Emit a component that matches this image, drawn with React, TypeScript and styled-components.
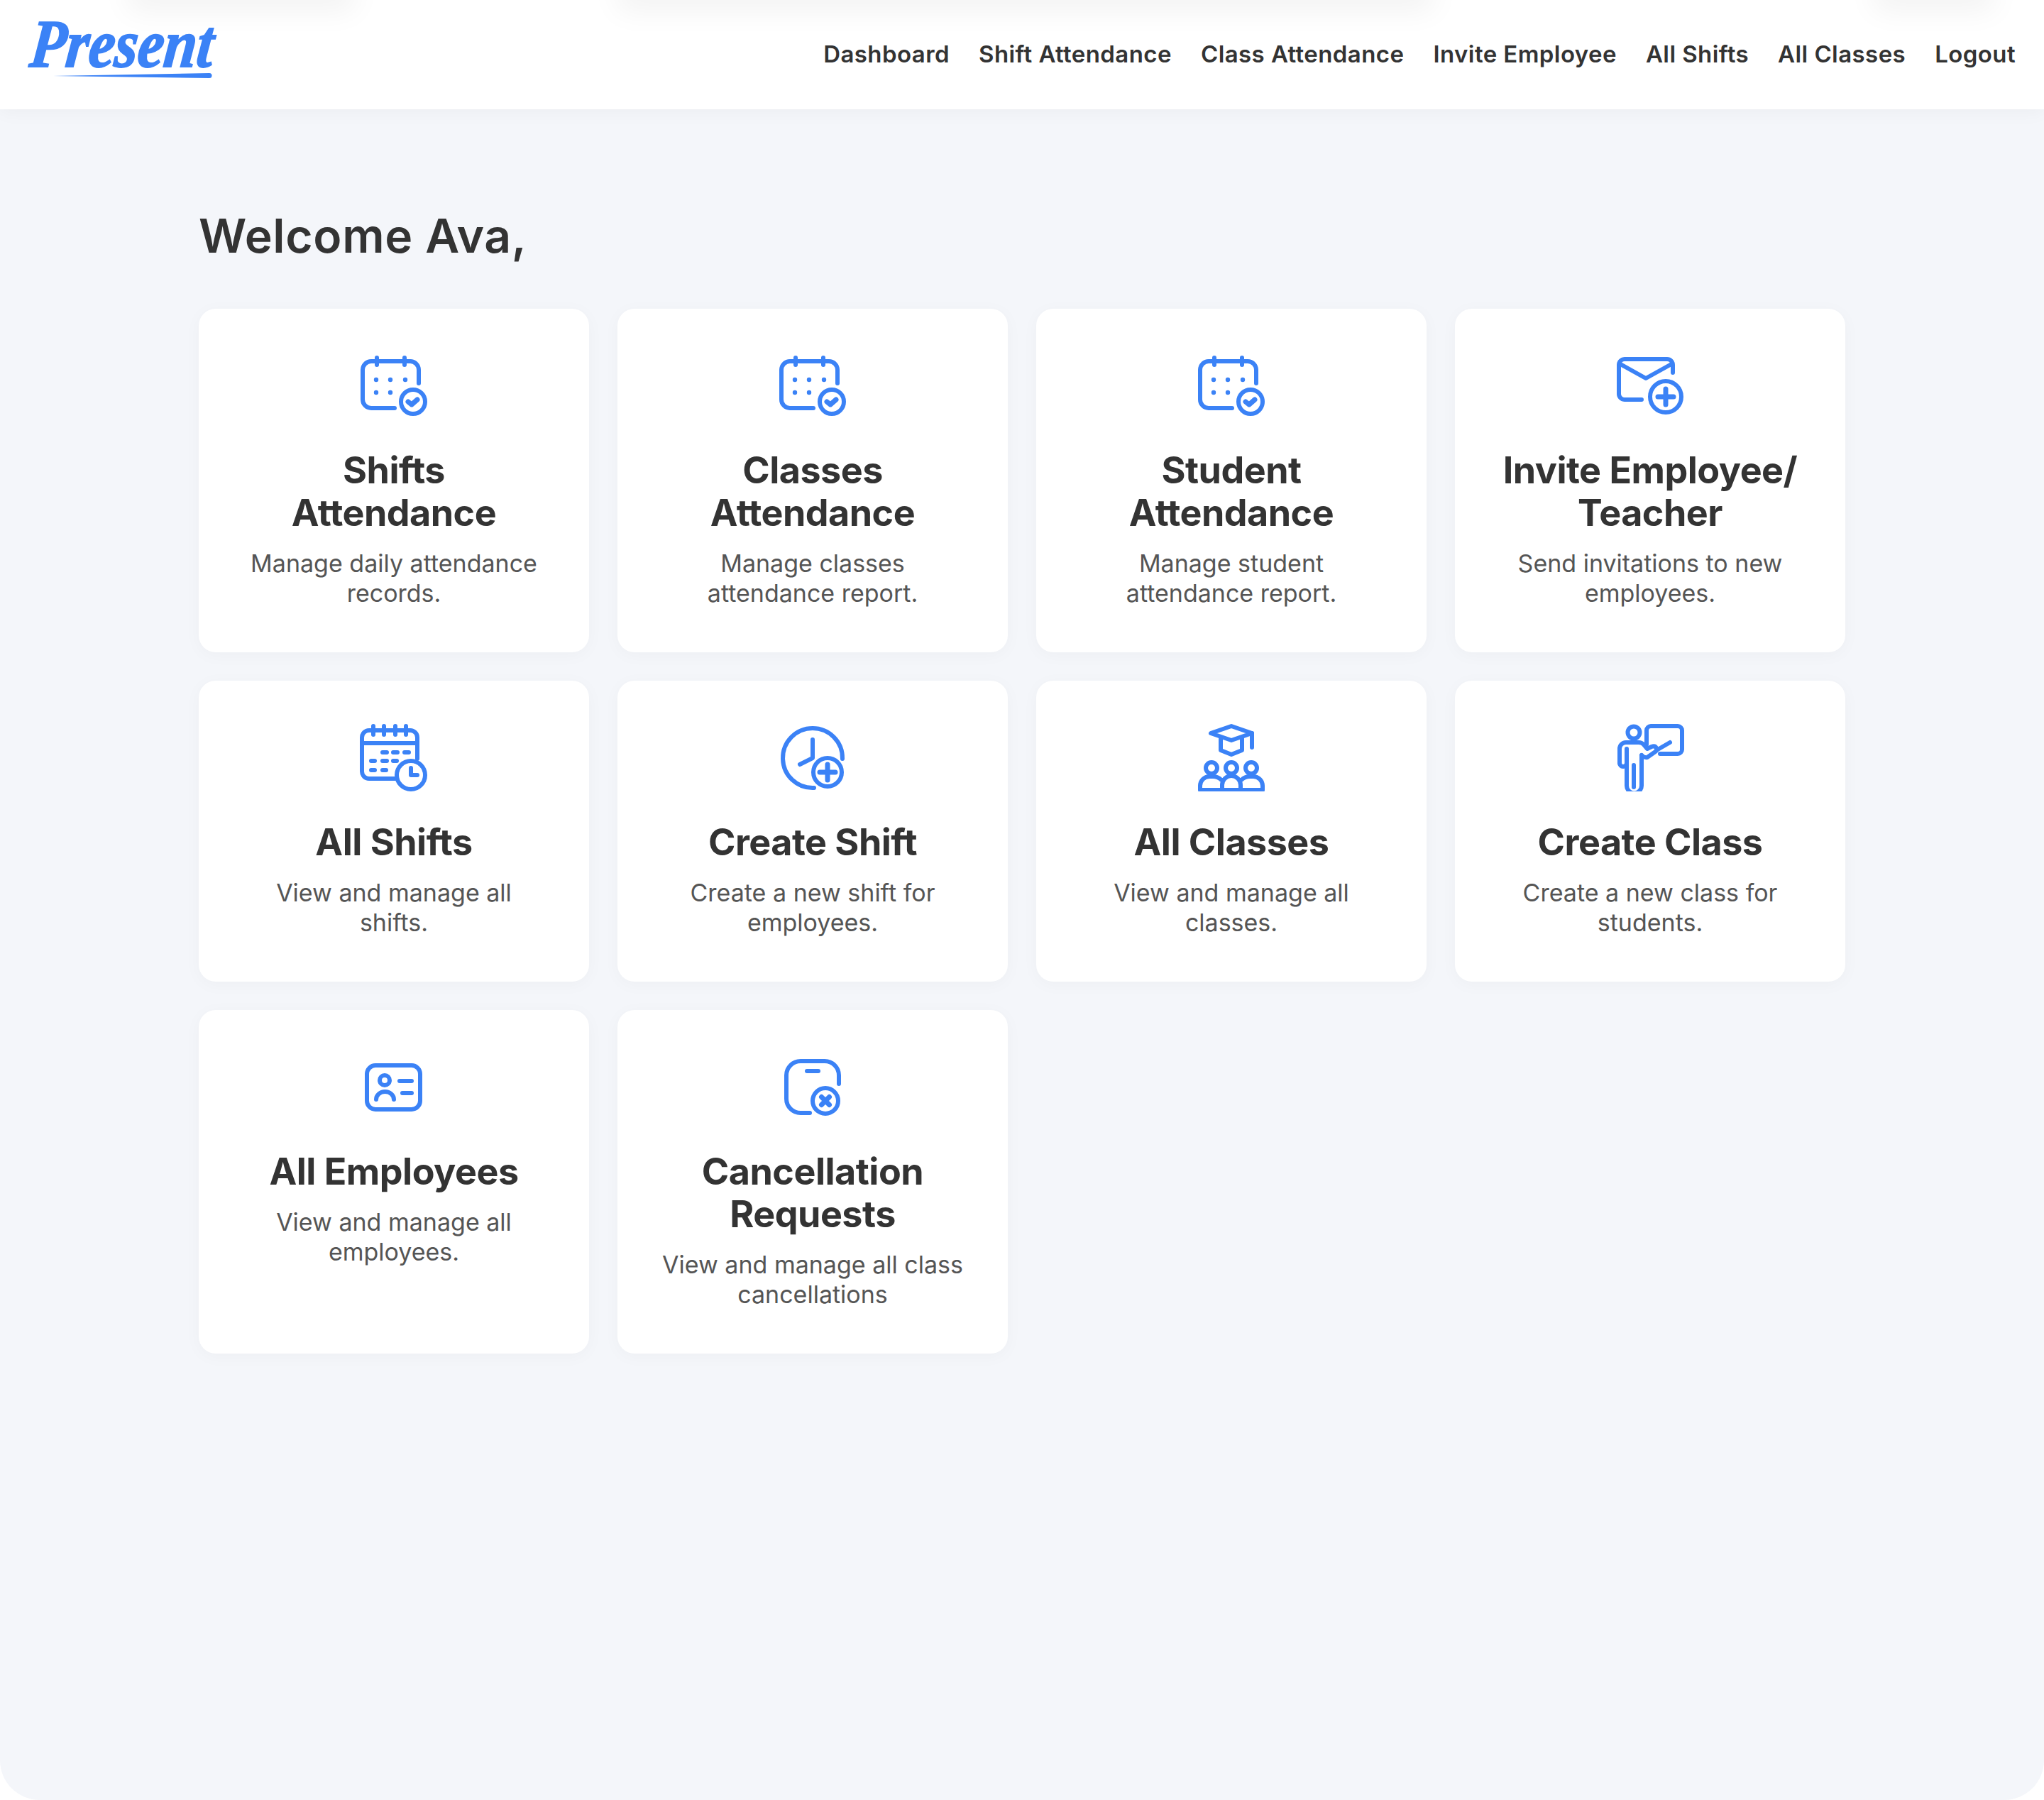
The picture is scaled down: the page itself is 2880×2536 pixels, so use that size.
import { FC, ReactNode } from "react";
import styled, { createGlobalStyle } from "styled-components";

const GlobalStyle = createGlobalStyle`
  html, body {
    margin: 0;
    padding: 0;
    background: #fff;
    font-family: "Inter", "Noto Sans", sans-serif;
  }
  * { box-sizing: border-box; }
`;

const blue = "#3b82f6";

const Page = styled.div`
  position: relative;
  height: 2536px;
  background: #f4f6fa;
  border-radius: 0 0 56px 56px;
  overflow: hidden;
`;

const Header = styled.header`
  position: relative;
  height: 154px;
  padding: 0 40px;
  display: flex;
  align-items: center;
  justify-content: space-between;
  background: #fff;
  overflow: hidden;
`;

const Shade = styled.div<{ $left: number; $width: number }>`
  position: absolute;
  top: -30px;
  left: ${(p) => p.$left}px;
  width: ${(p) => p.$width}px;
  height: 30px;
  box-shadow: 0 6px 40px 10px rgba(0, 0, 0, 0.05);
`;

const HeaderBar = styled.div`
  position: relative;
  box-shadow: 0 4px 24px rgba(0, 0, 0, 0.04);
`;

const LogoSvg = styled.svg`
  display: block;
  width: 320px;
  height: 130px;
  margin-bottom: 16px;
  overflow: visible;
`;

const Nav = styled.nav`
  position: relative;
  display: flex;
  gap: 41px;
  margin-bottom: 2px;
`;

const NavLink = styled.a`
  font-size: 33px;
  font-weight: 600;
  line-height: 40px;
  letter-spacing: 0.42px;
  color: #333;
  white-space: nowrap;
`;

const Main = styled.main`
  padding: 140px 280px 0;
`;

const Welcome = styled.h1`
  margin: 0 0 65px;
  font-size: 66px;
  font-weight: 600;
  line-height: 76px;
  letter-spacing: 0.65px;
  color: #333;
`;

const Grid = styled.div`
  display: grid;
  grid-template-columns: repeat(4, 550px);
  gap: 40px;
`;

const Card = styled.div`
  padding: 60px 60px 62px;
  background: #fff;
  border-radius: 24px;
  box-shadow: 0 4px 24px rgba(0, 0, 0, 0.03);
  display: flex;
  flex-direction: column;
  align-items: center;
  text-align: center;
`;

const IconSvg = styled.svg`
  display: block;
  width: 96px;
  height: 96px;
  margin-bottom: 42px;
  fill: none;
  stroke: ${blue};
  stroke-width: 6;
  stroke-linecap: round;
  stroke-linejoin: round;
`;

const Title = styled.h2`
  margin: 0 0 20px;
  font-size: 52px;
  font-weight: 700;
  line-height: 60px;
  letter-spacing: -0.5px;
  color: #333;
`;

const Desc = styled.p`
  margin: 0;
  font-size: 34px;
  font-weight: 400;
  line-height: 42px;
  color: #555;
`;

const Icon: FC<{ children: ReactNode }> = ({ children }) => (
  <IconSvg viewBox="0 0 96 96">{children}</IconSvg>
);

const CalendarCheck = () => (
  <Icon>
    <path d="M83 45V26a12 12 0 0 0-12-12H16A12 12 0 0 0 4 26v42a12 12 0 0 0 12 12h33" />
    <path d="M24 9v10M63 9v10" />
    <circle cx="75" cy="71" r="17" />
    <path d="M68 71l5 4 8-7" strokeWidth="7" />
    <g fill={blue} stroke="none">
      <circle cx="23" cy="40" r="3.200" />
      <circle cx="43" cy="40" r="3.200" />
      <circle cx="64" cy="40" r="3.200" />
      <circle cx="23" cy="58" r="3.200" />
      <circle cx="43" cy="58" r="3.200" />
    </g>
  </Icon>
);

const MailPlus = () => (
  <Icon>
    <path d="M80 30V19a8 8 0 0 0-8-8H12a8 8 0 0 0-8 8v41a8 8 0 0 0 8 8h24" />
    <path d="M6 18l36 20 36-20" />
    <circle cx="70" cy="64" r="22" />
    <path d="M59 64h22M70 53v22" strokeWidth="7" />
  </Icon>
);

const CalendarClock = () => (
  <Icon>
    <path d="M81 50V20a10 10 0 0 0-10-10H13A10 10 0 0 0 3 20v48a10 10 0 0 0 10 10h37" />
    <path d="M3 28h78M19 4v12M34 4v12M50 4v12M65 4v12" />
    <path d="M32 41h6M47 41h6M63 41h6M16 53h5M32 53h6M47 53h5M16 66h5M32 66h5" />
    <circle cx="72" cy="73" r="20" />
    <path d="M72 63v10h9" />
  </Icon>
);

const ClockPlus = () => (
  <Icon>
    <path d="M90 50A42 42 0 1 0 50 91" />
    <path d="M48 23v26l-18 9" />
    <circle cx="69" cy="69" r="20" />
    <path d="M58 69h22M69 58v22" strokeWidth="7" />
  </Icon>
);

const ClassGroup = () => (
  <Icon>
    <path d="M19 14L48 4l29 10-29 10z" />
    <path d="M33 21v17l15 6 15-6V21M77 14v20" />
    <circle cx="20" cy="63" r="8" />
    <circle cx="48" cy="63" r="8" />
    <circle cx="76" cy="63" r="8" />
    <path d="M4 94h88M4 94v-6a13 13 0 0 1 13-13h5q7 0 12 5M35 94v-7a13 13 0 0 1 26 0v7M92 94v-6a13 13 0 0 0-13-13h-5q-7 0-12 5" />
  </Icon>
);

const Teacher = () => (
  <Icon>
    <circle cx="25" cy="13" r="8.500" />
    <path d="M43 30V10a6 6 0 0 1 6-6h38a6 6 0 0 1 6 6v27a6 6 0 0 1-6 6H62" />
    <path d="M5 56V36a9 9 0 0 1 9-9h18q4 0 7 3l5 6 6-3q5-2 7 2 1 4-3 6L44 48q-4 1-8-3" />
    <path d="M5 56a5 5 0 0 0 10 0V36M15 56v32a10 10 0 0 0 21 0V45M25 59v31M57 38l19-11" />
  </Icon>
);

const IdCard = () => (
  <Icon>
    <rect x="10" y="18" width="75" height="62" rx="12" />
    <circle cx="35" cy="39" r="7" />
    <path d="M23 66a12.500 11 0 0 1 25 0M56 40h17M60 57h13" />
  </Icon>
);

const BoxCancel = () => (
  <Icon>
    <path d="M85 44V32a20 20 0 0 0-20-20H31a20 20 0 0 0-20 20v33a20 20 0 0 0 20 20h13" />
    <path d="M40 26h16" />
    <circle cx="66" cy="68" r="18" />
    <path d="M60.500 62.500l11 11M71.500 62.500l-11 11" strokeWidth="7" />
  </Icon>
);

const cards = [
  { icon: <CalendarCheck />, title: "Shifts Attendance", text: "Manage daily attendance records." },
  { icon: <CalendarCheck />, title: "Classes Attendance", text: "Manage classes attendance report." },
  { icon: <CalendarCheck />, title: "Student Attendance", text: "Manage student attendance report." },
  { icon: <MailPlus />, title: "Invite Employee/ Teacher", text: "Send invitations to new employees." },
  { icon: <CalendarClock />, title: "All Shifts", text: "View and manage all shifts." },
  { icon: <ClockPlus />, title: "Create Shift", text: "Create a new shift for employees." },
  { icon: <ClassGroup />, title: "All Classes", text: "View and manage all classes." },
  { icon: <Teacher />, title: "Create Class", text: "Create a new class for students." },
  { icon: <IdCard />, title: "All Employees", text: "View and manage all employees." },
  { icon: <BoxCancel />, title: "Cancellation Requests", text: "View and manage all class cancellations" },
];

const links = [
  "Dashboard",
  "Shift Attendance",
  "Class Attendance",
  "Invite Employee",
  "All Shifts",
  "All Classes",
  "Logout",
];

const Logo = () => (
  <LogoSvg viewBox="0 0 320 130">
    <text
      x="0"
      y="0"
      transform="translate(0 90) skewX(-6) scale(.863 1)"
      fontFamily="'Liberation Serif', serif"
      fontWeight="700"
      fontStyle="italic"
      fontSize="96"
      fill={blue}
      stroke={blue}
      strokeWidth="2"
    >
      Present
    </text>
    <path d="M35 103L255 99a3.500 3.500 0 0 1 0 7z" fill={blue} />
  </LogoSvg>
);

const App: FC = () => (
  <>
    <GlobalStyle />
    <Page>
      <HeaderBar>
        <Header>
          <Shade $left={190} $width={300} />
          <Shade $left={880} $width={1130} />
          <Shade $left={2650} $width={150} />
          <Logo />
          <Nav>
            {links.map((l) => (
              <NavLink key={l}>{l}</NavLink>
            ))}
          </Nav>
        </Header>
      </HeaderBar>
      <Main>
        <Welcome>Welcome Ava,</Welcome>
        <Grid>
          {cards.map((c) => (
            <Card key={c.title}>
              {c.icon}
              <Title>{c.title}</Title>
              <Desc>{c.text}</Desc>
            </Card>
          ))}
        </Grid>
      </Main>
    </Page>
  </>
);

export default App;
